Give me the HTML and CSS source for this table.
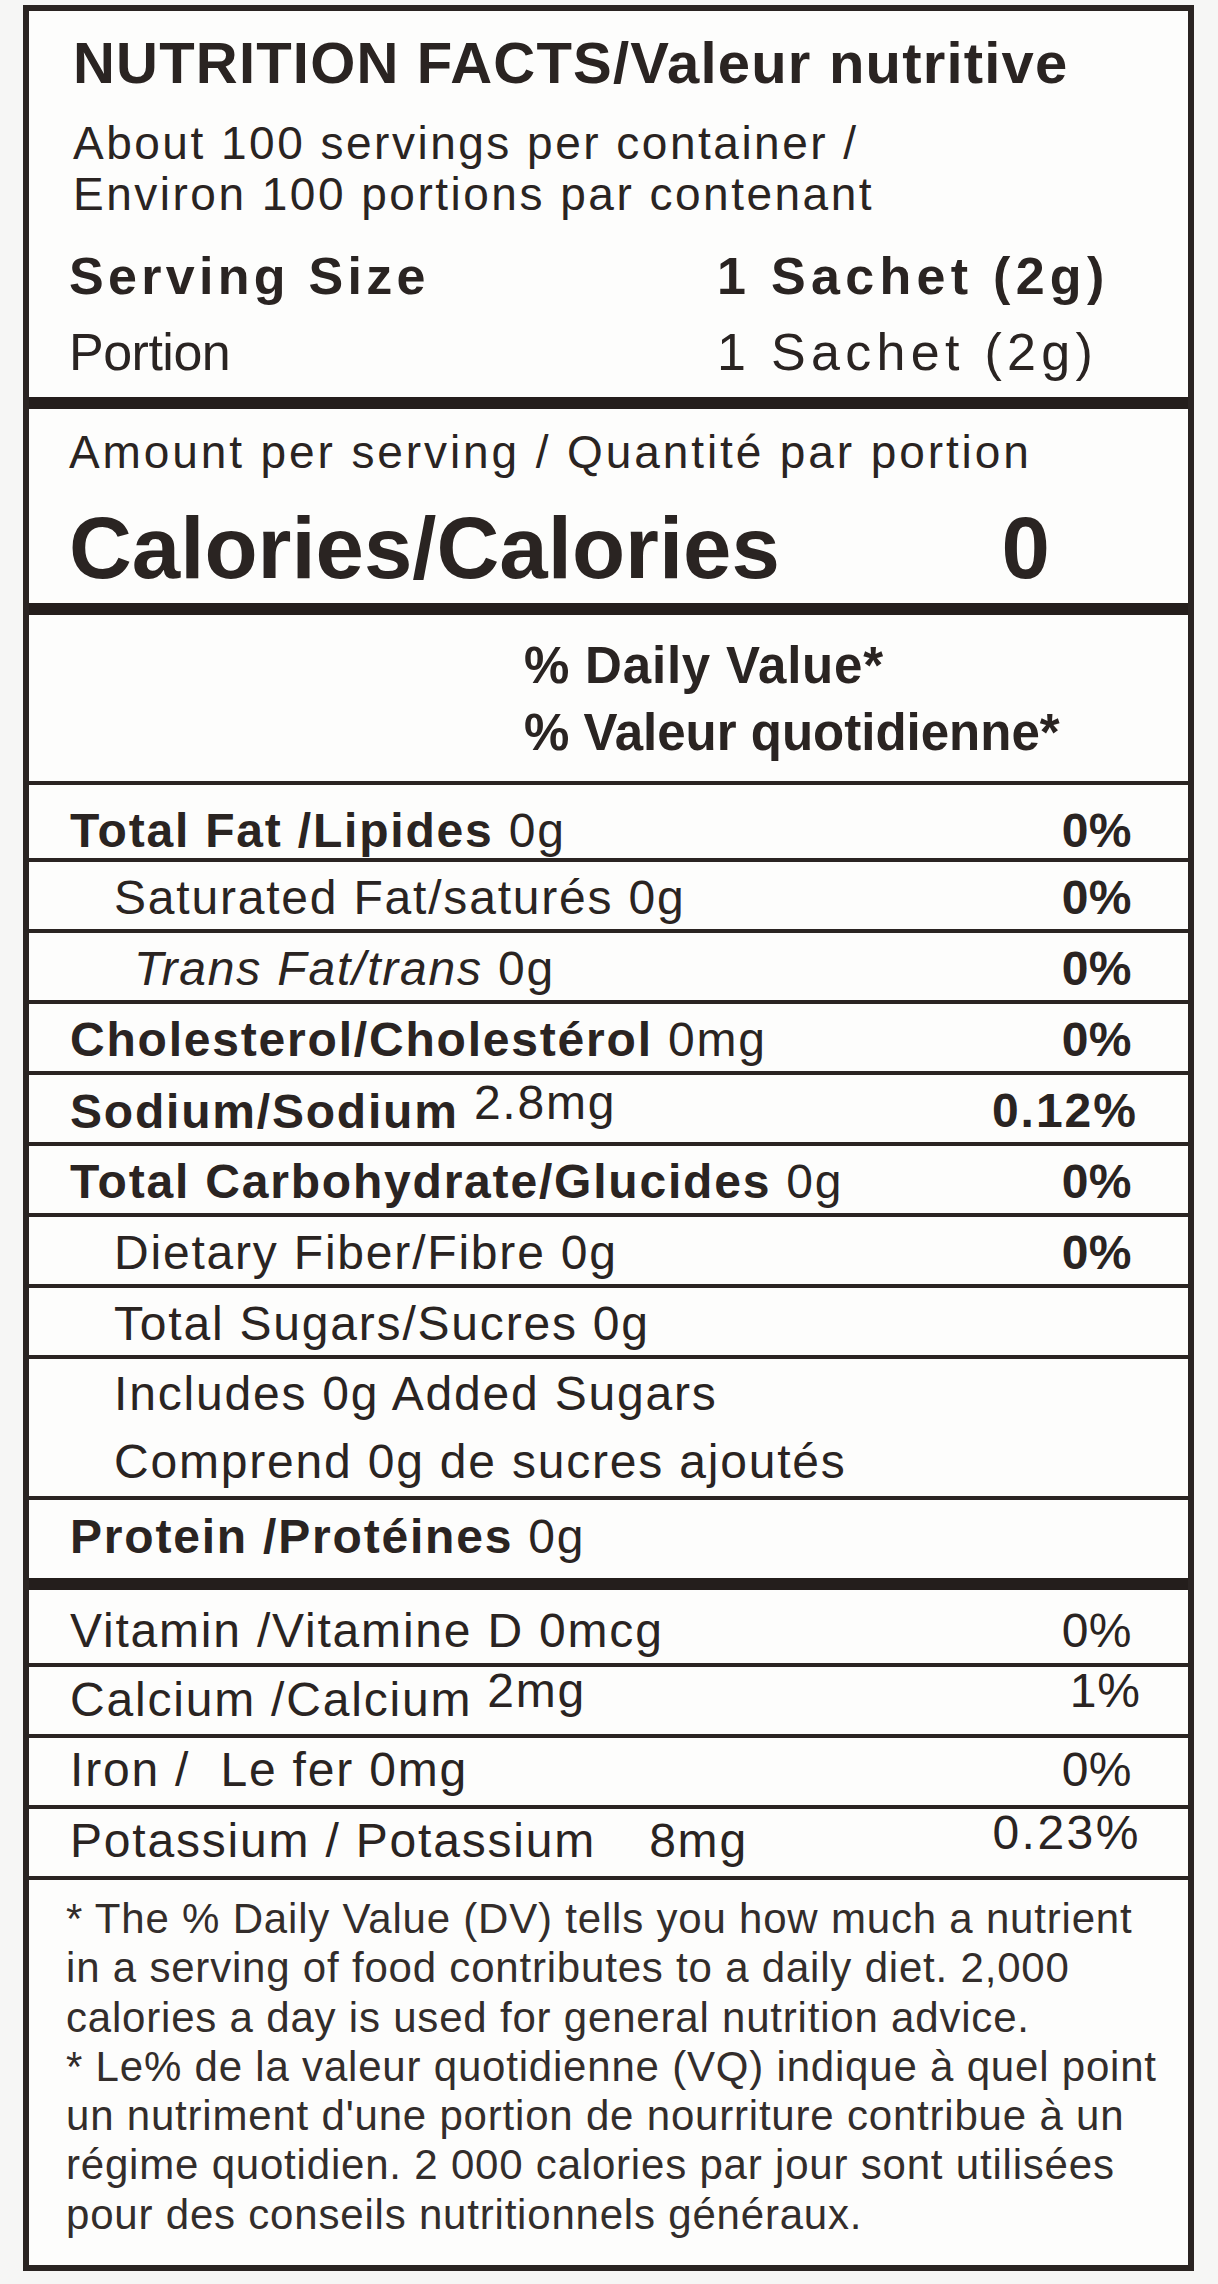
FILE: index.html
```html
<!DOCTYPE html>
<html lang="en">
<head>
<meta charset="utf-8">
<title>Nutrition Facts / Valeur nutritive</title>
<link rel="stylesheet" href="styles.css">
</head>
<body>
<div class="label">
  <section class="head">
    <h1 class="title">NUTRITION FACTS/Valeur nutritive</h1>
    <p class="servings first-line">About 100 servings per container /</p>
    <p class="servings">Environ 100 portions par contenant</p>
    <div class="size size-en"><span class="size-name">Serving Size</span><span class="size-val">1 Sachet (2g)</span></div>
    <div class="size size-fr"><span class="size-name-fr">Portion</span><span class="size-val">1 Sachet (2g)</span></div>
  </section>
  <section class="cal">
    <p class="amount">Amount per serving / Quantité par portion</p>
    <div class="calories"><span>Calories/Calories</span><span>0</span></div>
  </section>
  <section class="dv">
    <p class="dv-line">% Daily Value*</p>
    <p class="dv-line">% Valeur quotidienne*</p>
  </section>
  <div class="row first"><span class="name"><b>Total Fat /Lipides</b> 0g</span><b class="pct">0%</b></div>
  <div class="row"><span class="name ind">Saturated Fat/saturés 0g</span><b class="pct">0%</b></div>
  <div class="row"><span class="name ind2"><i>Trans Fat/trans</i> 0g</span><b class="pct">0%</b></div>
  <div class="row"><span class="name"><b>Cholesterol/Cholestérol</b> 0mg</span><b class="pct">0%</b></div>
  <div class="row"><span class="name"><b>Sodium/Sodium</b> <span class="raise">2.8mg</span></span><b class="pct wide">0.12%</b></div>
  <div class="row"><span class="name"><b>Total Carbohydrate/Glucides</b> 0g</span><b class="pct">0%</b></div>
  <div class="row"><span class="name ind">Dietary Fiber/Fibre 0g</span><b class="pct">0%</b></div>
  <div class="row"><span class="name ind">Total Sugars/Sucres 0g</span></div>
  <div class="row double"><span class="name ind">Includes 0g Added Sugars</span><span class="name ind">Comprend 0g de sucres ajoutés</span></div>
  <div class="row protein"><span class="name"><b>Protein /Protéines</b> 0g</span></div>
  <div class="row vit vit-first"><span class="name">Vitamin /Vitamine D 0mcg</span><span class="pct">0%</span></div>
  <div class="row vit"><span class="name">Calcium /Calcium <span class="raise">2mg</span></span><span class="pct shift raise-pct">1%</span></div>
  <div class="row vit"><span class="name">Iron /&nbsp; Le fer 0mg</span><span class="pct">0%</span></div>
  <div class="row vit"><span class="name">Potassium / Potassium <span class="gap">8mg</span></span><span class="pct shift wide-vit raise-pct">0.23%</span></div>
  <div class="foot">
    <span class="fl">* The % Daily Value (DV) tells you how much a nutrient</span>
    <span class="fl">in a serving of food contributes to a daily diet. 2,000</span>
    <span class="fl">calories a day is used for general nutrition advice.</span>
    <span class="fl">* Le% de la valeur quotidienne (VQ) indique à quel point</span>
    <span class="fl">un nutriment d'une portion de nourriture contribue à un</span>
    <span class="fl">régime quotidien. 2 000 calories par jour sont utilisées</span>
    <span class="fl">pour des conseils nutritionnels généraux.</span>
  </div>
</div>
</body>
</html>
```

FILE: styles.css
```css
* {
  box-sizing: border-box;
}

html, body {
  margin: 0;
  padding: 0;
  background: #f6f6f5;
}

body {
  width: 1218px;
  height: 2284px;
  font-family: "Liberation Sans", Arial, sans-serif;
  color: #2a2422;
}

p, h1 {
  margin: 0;
  font-weight: normal;
}

.label {
  margin: 5px 0 0 23px;
  width: 1171px;
  border: 6px solid #2a2422;
  background: #fdfdfc;
}

/* ---------- header ---------- */
.head {
  padding: 17px 0 8px 40px;
  border-bottom: 12px solid #241e1c;
}

.title {
  font-size: 58px;
  font-weight: bold;
  line-height: 70px;
  letter-spacing: 1.2px;
  margin-left: 4px;
}

.servings {
  font-size: 46px;
  line-height: 51px;
  letter-spacing: 2.5px;
  margin-left: 4px;
}

.servings.first-line {
  margin-top: 20px;
}

.size {
  display: grid;
  grid-template-columns: 648px auto;
  font-size: 52px;
  line-height: 74px;
}

.size-en {
  margin-top: 18px;
  line-height: 77px;
  font-weight: bold;
}

.size-name {
  letter-spacing: 4.3px;
}

.size-name-fr {
  letter-spacing: -0.5px;
}

.size-val {
  letter-spacing: 5.3px;
}

/* ---------- calories ---------- */
.cal {
  padding: 16px 138px 10px 40px;
  border-bottom: 12px solid #241e1c;
}

.amount {
  font-size: 46px;
  line-height: 54px;
  letter-spacing: 2.9px;
}

.calories {
  display: flex;
  justify-content: space-between;
  margin-top: 24px;
  font-size: 87px;
  line-height: 90px;
  font-weight: bold;
}

/* ---------- daily value header ---------- */
.dv {
  padding: 17px 0 15px 495px;
  border-bottom: 4px solid #2a2422;
}

.dv-line {
  font-size: 51px;
  line-height: 67px;
  font-weight: bold;
}

.dv-line:first-child {
  letter-spacing: 0.8px;
}

/* ---------- nutrient rows ---------- */
.row {
  display: flex;
  justify-content: space-between;
  align-items: flex-start;
  height: 71px;
  padding: 4px 56px 0 41px;
  border-bottom: 4px solid #2a2422;
  font-size: 48px;
  line-height: 64px;
  white-space: nowrap;
}

.row.first {
  height: 77px;
  padding-top: 14px;
}

.name {
  letter-spacing: 1.8px;
}

.ind {
  margin-left: 44px;
}

.ind2 {
  margin-left: 64px;
}

.pct {
  letter-spacing: 0.5px;
}

.pct.wide {
  letter-spacing: 2px;
  margin-right: -6px;
}

.raise {
  vertical-align: 9px;
  line-height: 1;
}

.double {
  flex-direction: column;
  justify-content: flex-start;
  height: 141px;
  padding-top: 1px;
  line-height: 68px;
}

.protein {
  height: 90px;
  padding-top: 5px;
  border-bottom-width: 12px;
  border-bottom-color: #241e1c;
}

.vit {
  padding-top: 0;
}

.vit.vit-first {
  height: 77px;
  padding-top: 9px;
}

.vit .shift {
  margin-right: -9px;
  letter-spacing: 1px;
}

.vit .wide-vit {
  letter-spacing: 2.5px;
}

.raise-pct {
  vertical-align: 3px;
  line-height: 1;
}

.gap {
  margin-left: 38px;
}

/* ---------- footnote ---------- */
.foot {
  padding: 14px 0 26px 37px;
  font-size: 42px;
  line-height: 49.3px;
  letter-spacing: 0.8px;
  color: #332d2b;
}

.fl {
  display: block;
  white-space: nowrap;
}
```
